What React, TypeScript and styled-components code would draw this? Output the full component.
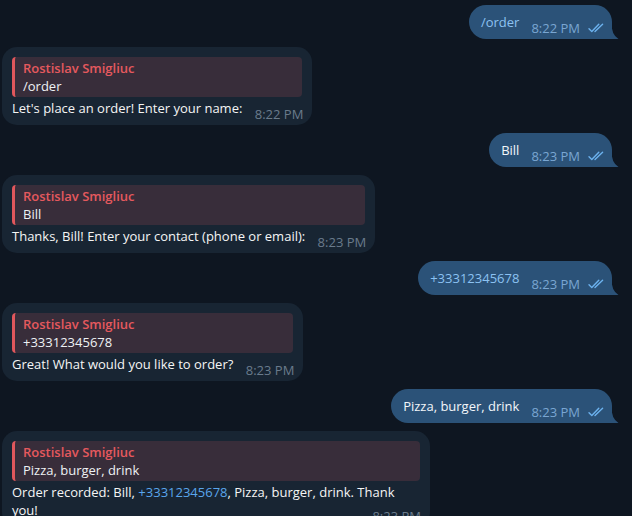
import React from 'react';
import styled, { createGlobalStyle } from 'styled-components';

type Message =
  | { id: number; out: true; text: React.ReactNode; time: string }
  | { id: number; out: false; text: React.ReactNode; time: string; reply: { name: string; text: string } };

const AUTHOR = 'Rostislav Smigliuc';

// built lazily so the styled parts below exist by the time JSX is created
function getMessages(): Message[] {
  return [
    { id: 1, out: true, text: <Command>/order</Command>, time: '8:22 PM' },
    { id: 2, out: false, reply: { name: AUTHOR, text: '/order' }, text: 'Let\'s place an order! Enter your name:', time: '8:22 PM' },
    { id: 3, out: true, text: 'Bill', time: '8:23 PM' },
    { id: 4, out: false, reply: { name: AUTHOR, text: 'Bill' }, text: 'Thanks, Bill! Enter your contact (phone or email):', time: '8:23 PM' },
    { id: 5, out: true, text: <Command>+33312345678</Command>, time: '8:23 PM' },
    { id: 6, out: false, reply: { name: AUTHOR, text: '+33312345678' }, text: 'Great! What would you like to order?', time: '8:23 PM' },
    { id: 7, out: true, text: 'Pizza, burger, drink', time: '8:23 PM' },
    {
      id: 8,
      out: false,
      reply: { name: AUTHOR, text: 'Pizza, burger, drink' },
      text: (
        <>
          Order recorded: Bill, <Link>+33312345678</Link>, Pizza, burger, drink. Thank you!
        </>
      ),
      time: '8:23 PM',
    },
  ];
}

function DoubleCheck() {
  return (
    <CheckIcon viewBox="0 0 18 10" width="18" height="10">
      <path d="M1 5.8 L3.8 8.6 L10.8 1.2" />
      <path d="M7 8.6 L14.6 1.2" />
    </CheckIcon>
  );
}

function Tail() {
  return (
    <TailIcon viewBox="0 0 8 18" width="8" height="18">
      <path d="M0 0 Q0.4 14 7.5 18 L0 18 Z" />
    </TailIcon>
  );
}

export default function App() {
  const messages = getMessages();
  return (
    <>
      <GlobalStyle />
      <Chat>
        {messages.map((m) =>
          m.out ? (
            <Row key={m.id} $out>
              <OutBubble>
                <OutText>{m.text}</OutText>
                <OutMeta>
                  <span>{m.time}</span>
                  <DoubleCheck />
                </OutMeta>
                <Tail />
              </OutBubble>
            </Row>
          ) : (
            <Row key={m.id} $out={false}>
              <InBubble>
                <Quote>
                  <QuoteName>{m.reply.name}</QuoteName>
                  <QuoteText>{m.reply.text}</QuoteText>
                </Quote>
                <InBody>
                  {m.text}
                  <TimeSpacer />
                  <InTime>{m.time}</InTime>
                </InBody>
              </InBubble>
            </Row>
          )
        )}
      </Chat>
    </>
  );
}

const GlobalStyle = createGlobalStyle`
  html, body {
    margin: 0;
    background: #0e1621;
  }
  body {
    font-family: "Open Sans", "Noto Sans", sans-serif;
    font-size: 13px;
    -webkit-font-smoothing: antialiased;
  }
`;

const Chat = styled.div`
  display: flex;
  flex-direction: column;
  gap: 8px;
  width: 632px;
  height: 516px;
  padding: 5px 0 0 2px;
  box-sizing: border-box;
  overflow: hidden;
`;

const Row = styled.div<{ $out: boolean }>`
  display: flex;
  flex-shrink: 0;
  justify-content: ${(p) => (p.$out ? 'flex-end' : 'flex-start')};
  padding-right: ${(p) => (p.$out ? '20px' : '0')};
`;

const OutBubble = styled.div`
  position: relative;
  display: flex;
  align-items: flex-end;
  background: #2b5278;
  border-radius: 17px 17px 0 17px;
  padding: 8px 6px 7px 12px;
  color: #f2f6fa;
  line-height: 19px;
`;

const OutText = styled.span`
  white-space: nowrap;
`;

const Command = styled.span`
  color: #8cc2f2;
`;

const OutMeta = styled.span`
  display: flex;
  align-items: center;
  gap: 8px;
  margin-left: 12px;
  margin-bottom: -3px;
  font-size: 13px;
  line-height: 14px;
  color: #7aa6d2;
  white-space: nowrap;
`;

const CheckIcon = styled.svg`
  display: block;
  fill: none;
  stroke: #6cb2ee;
  stroke-width: 1.4;
  stroke-linecap: round;
  stroke-linejoin: round;
`;

const TailIcon = styled.svg`
  position: absolute;
  right: -7px;
  bottom: 0;
  display: block;
  fill: #2b5278;
`;

const InBubble = styled.div`
  max-width: 408px;
  background: #182533;
  border-radius: 15px;
  padding: 10px 10px 8px 10px;
  color: #f5f5f5;
`;

const Quote = styled.div`
  background: #382d3a;
  border-left: 3px solid #e0575c;
  border-radius: 4px;
  padding: 2px 10px 2px 8px;
  line-height: 18px;
`;

const QuoteName = styled.div`
  color: #e5595e;
  font-weight: 600;
`;

const QuoteText = styled.div`
  color: #eef1f4;
`;

const InBody = styled.div`
  position: relative;
  margin-top: 2px;
  line-height: 18px;
`;

const Link = styled.span`
  color: #5aa6ec;
`;

const TimeSpacer = styled.span`
  display: inline-block;
  width: 60px;
`;

const InTime = styled.span`
  position: absolute;
  right: -1px;
  bottom: -4px;
  font-size: 13px;
  line-height: 14px;
  color: #6a7b8c;
  white-space: nowrap;
`;
